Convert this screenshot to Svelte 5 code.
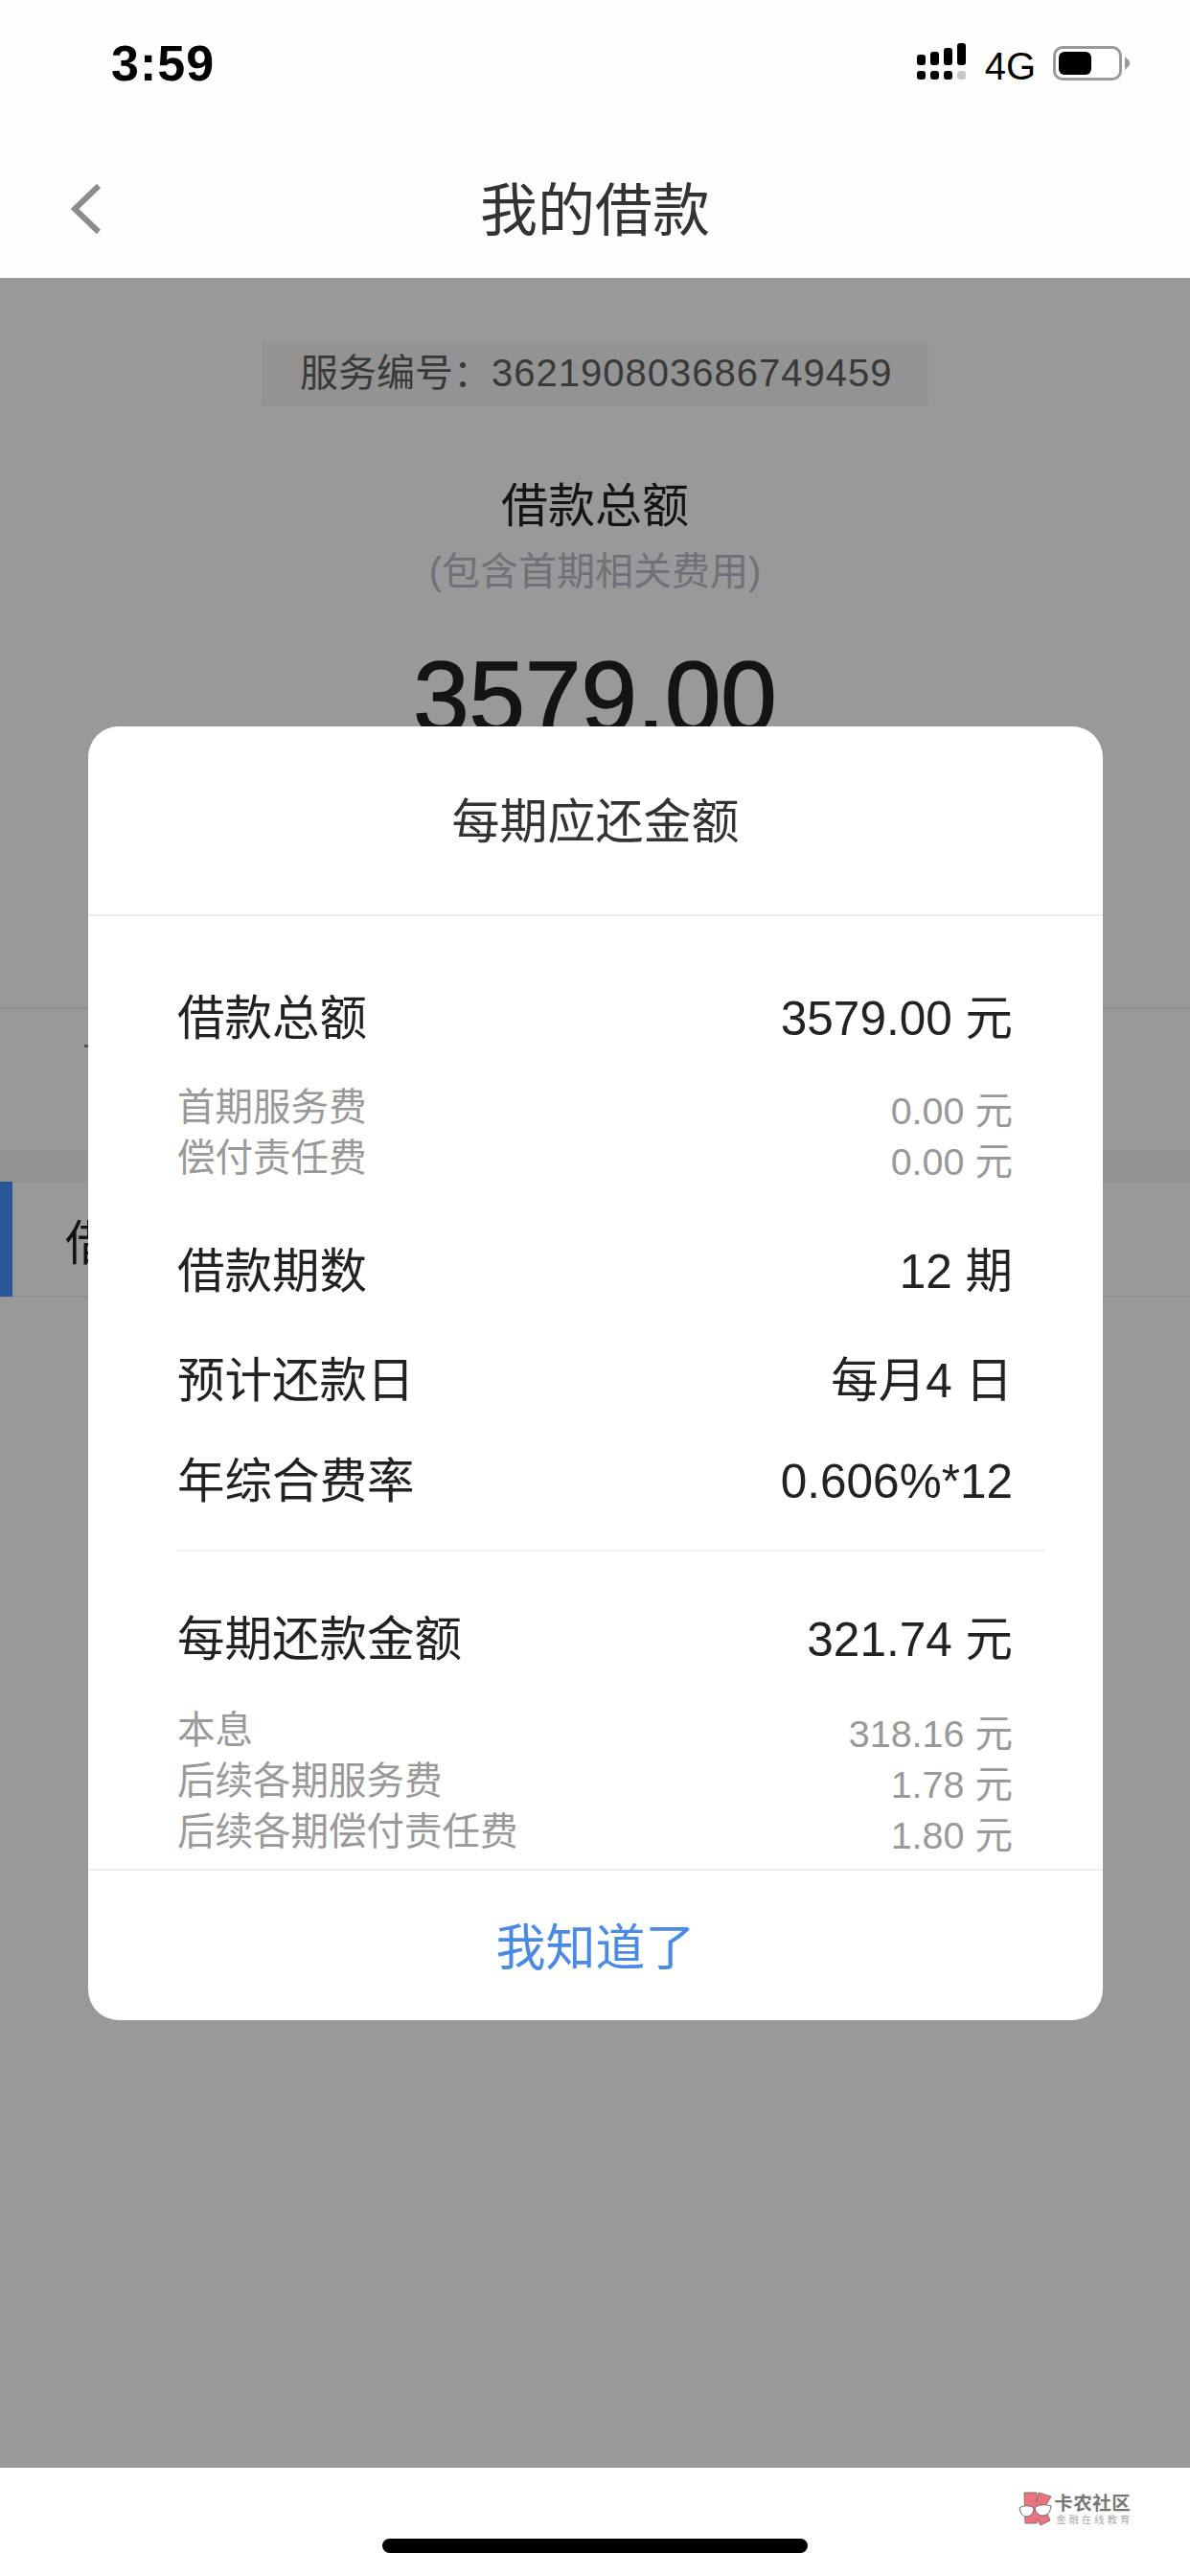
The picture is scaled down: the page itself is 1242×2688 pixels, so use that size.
<script>
  const block1 = [
    { label: '首期服务费', value: '0.00 元' },
    { label: '偿付责任费', value: '0.00 元' }
  ];
  const block2 = [
    { label: '本息', value: '318.16 元' },
    { label: '后续各期服务费', value: '1.78 元' },
    { label: '后续各期偿付责任费', value: '1.80 元' }
  ];
  const heights = [11, 14, 18, 23];
</script>

<div class="page">
  <header class="top">
    <div class="status">
      <span class="time">3:59</span>
      <div class="status-right">
        <div class="signal">
          {#each heights as h, i}
            <div class="sig-col">
              <i class="bar" style="height:{h}px"></i>
              <i class="dot" class:off={i === 3}></i>
            </div>
          {/each}
        </div>
        <span class="net">4G</span>
        <div class="battery"><i class="fill"></i></div>
        <i class="nub"></i>
      </div>
    </div>
    <div class="nav">
      <svg class="back" width="36" height="56" viewBox="0 0 36 56">
        <path d="M31 4 L6 28 L31 52" fill="none" stroke="#8c8c8c" stroke-width="6" />
      </svg>
      <h1>我的借款</h1>
    </div>
  </header>

  <main class="content">
    <div class="code"><span class="code-box">服务编号：<span class="code-num">362190803686749459</span></span></div>
    <div class="total-label">借款总额</div>
    <div class="total-note">(包含首期相关费用)</div>
    <div class="total">3579.00</div>
    <div class="info-row"><i class="tick"></i></div>
    <div class="band"></div>
    <div class="section"><i class="accent"></i><span>借</span></div>

    <div class="overlay"></div>

    <section class="modal">
      <div class="m-head">每期应还金额</div>
      <div class="m-body">
        <div class="row first"><span>借款总额</span><span>3579.00 元</span></div>
        <div class="subs s1">
          {#each block1 as r}
            <div class="sub"><span>{r.label}</span><span class="sv">{r.value}</span></div>
          {/each}
        </div>
        <div class="row r-term"><span>借款期数</span><span>12 期</span></div>
        <div class="row r-day"><span>预计还款日</span><span>每月4 日</span></div>
        <div class="row r-rate"><span>年综合费率</span><span>0.606%*12</span></div>
        <div class="rule"></div>
        <div class="row r-pay"><span>每期还款金额</span><span>321.74 元</span></div>
        <div class="subs s2">
          {#each block2 as r}
            <div class="sub"><span>{r.label}</span><span class="sv">{r.value}</span></div>
          {/each}
        </div>
      </div>
      <div class="m-foot">我知道了</div>
    </section>
  </main>

  <footer class="foot">
    <div class="mark">
      <svg width="36" height="38" viewBox="0 0 36 38">
        <path d="M6 2 H19 V12 L21 2 L34 6 L27 18 L33 31 L23 36 L19 29 V34 H7 Z" fill="#ec7480" stroke="#8a6a6c" stroke-width="1" />
        <path d="M1 18 C5 15 12 15 16 18 C16 24 12 27 8 27 C4 27 2 23 1 18 Z" fill="#fff" stroke="#666" stroke-width="1" />
        <path d="M17 18 C21 14 29 14 34 16 C33 23 30 26 25 26 C21 26 18 23 17 18 Z" fill="#fff" stroke="#666" stroke-width="1" />
      </svg>
      <div class="mark-text">
        <b>卡农社区</b>
        <small>金融在线教育</small>
      </div>
    </div>
    <div class="home"></div>
  </footer>
</div>

<style>
  :global(body) {
    margin: 0;
    background: #fff;
  }
  .page {
    width: 1242px;
    height: 2688px;
    display: flex;
    flex-direction: column;
    font-family: "Liberation Sans", "Noto Sans CJK SC", sans-serif;
    color: #222;
    overflow: hidden;
  }
  .top {
    height: 290px;
    flex: none;
    background: #fdfdfd;
  }
  .status {
    height: 130px;
    padding: 0 63px 0 116px;
    display: flex;
    justify-content: space-between;
    align-items: flex-start;
  }
  .time {
    margin-top: 36px;
    font-size: 52px;
    line-height: 60px;
    font-weight: 700;
    letter-spacing: 1px;
    color: #000;
  }
  .status-right {
    display: flex;
    align-items: flex-start;
    margin-top: 45px;
  }
  .signal {
    display: flex;
    gap: 5px;
    height: 38px;
    width: 52px;
    align-items: flex-end;
  }
  .sig-col {
    display: flex;
    flex-direction: column;
    align-items: center;
    gap: 6px;
  }
  .bar {
    display: block;
    width: 9px;
    background: #000;
    border-radius: 3px;
  }
  .dot {
    display: block;
    width: 9px;
    height: 9px;
    background: #000;
    border-radius: 3px;
  }
  .dot.off {
    background: #c8c8c8;
  }
  .net {
    margin-left: 19px;
    margin-top: 2px;
    font-size: 40px;
    line-height: 44px;
    color: #000;
  }
  .battery {
    margin-left: 18px;
    margin-top: 3px;
    width: 72px;
    height: 36px;
    box-sizing: border-box;
    border: 3px solid #9a9a9a;
    border-radius: 10px;
    padding: 3px;
    background: #fff;
  }
  .fill {
    display: block;
    width: 34px;
    height: 24px;
    background: #000;
    border-radius: 6px;
  }
  .nub {
    display: block;
    margin: 14px 0 0 3px;
    width: 5px;
    height: 14px;
    background: #9a9a9a;
    clip-path: polygon(0 0, 100% 35%, 100% 65%, 0 100%);
  }
  .nav {
    height: 160px;
    position: relative;
    display: flex;
    justify-content: center;
    padding-top: 55px;
    box-sizing: border-box;
  }
  .back {
    position: absolute;
    left: 72px;
    top: 60px;
  }
  h1 {
    margin: 0;
    font-size: 60px;
    line-height: 72px;
    font-weight: 400;
    color: #333;
  }

  .content {
    flex: 1;
    position: relative;
    background: #fff;
  }
  .code {
    display: flex;
    justify-content: center;
    padding-top: 67px;
  }
  .code-box {
    width: 696px;
    height: 67px;
    box-sizing: border-box;
    padding-left: 40px;
    background: #f5f5f5;
    border-radius: 4px;
    font-size: 40px;
    line-height: 65px;
    color: #5f5f5f;
    white-space: nowrap;
  }
  .code-num {
    letter-spacing: 1px;
  }
  .total-label {
    margin-top: 74px;
    text-align: center;
    font-size: 49px;
    line-height: 60px;
    color: #222;
  }
  .total-note {
    margin-top: 12px;
    text-align: center;
    font-size: 40px;
    line-height: 52px;
    color: #bbbbcc;
  }
  .total {
    margin-top: 46px;
    text-align: center;
    font-size: 105px;
    line-height: 120px;
    color: #222;
    -webkit-text-stroke: 1.5px #222;
  }
  .info-row {
    margin-top: 263px;
    height: 149px;
    border-top: 2px solid #f0f0f0;
    position: relative;
    padding: 37px 0 0 88px;
    box-sizing: border-box;
  }
  .tick {
    display: block;
    width: 6px;
    height: 3px;
    background: #888;
  }
  .band {
    height: 34px;
    background: #f5f5f5;
  }
  .section {
    height: 120px;
    display: flex;
    align-items: center;
    border-bottom: 2px solid #f0f0f0;
    box-sizing: border-box;
    font-size: 50px;
    color: #222;
  }
  .accent {
    width: 13px;
    height: 120px;
    margin-right: 55px;
    background: #4991ff;
  }

  .overlay {
    position: absolute;
    inset: 0;
    background: rgba(0, 0, 0, 0.4);
  }
  .modal {
    position: absolute;
    left: 92px;
    top: 468px;
    width: 1059px;
    height: 1350px;
    background: #fff;
    border-radius: 32px;
    display: flex;
    flex-direction: column;
    overflow: hidden;
  }
  .m-head {
    height: 198px;
    flex: none;
    box-sizing: border-box;
    border-bottom: 2px solid #eee;
    padding-top: 70px;
    text-align: center;
    font-size: 50px;
    line-height: 60px;
    color: #333;
  }
  .m-body {
    height: 996px;
    flex: none;
    box-sizing: border-box;
    padding-left: 93px;
    border-bottom: 2px solid #eee;
  }
  .row {
    height: 60px;
    padding-right: 94px;
    display: flex;
    justify-content: space-between;
    align-items: center;
    font-size: 49.5px;
    line-height: 60px;
    color: #222;
  }
  .row.first { margin-top: 77px; }
  .s1 { margin-top: 36px; }
  .r-term { margin-top: 62px; }
  .r-day { margin-top: 54px; }
  .r-rate { margin-top: 45px; }
  .rule {
    height: 2px;
    margin: 41px 60px 0 0;
    background: #eee;
  }
  .r-pay { margin-top: 62px; }
  .s2 { margin-top: 38px; }
  .sub {
    height: 53px;
    padding-right: 94px;
    display: flex;
    justify-content: space-between;
    font-size: 39.5px;
    line-height: 53px;
    color: #999;
  }
  .sv {
    margin-top: 4px;
  }
  .m-foot {
    flex: 1;
    display: flex;
    justify-content: center;
    align-items: center;
    padding-bottom: 4px;
    font-size: 52px;
    color: #4a8ae2;
  }

  .foot {
    height: 113px;
    flex: none;
    background: #fff;
    display: flex;
    flex-direction: column;
    align-items: center;
    position: relative;
  }
  .mark {
    align-self: flex-end;
    display: flex;
    align-items: center;
    gap: 1px;
    margin: 22px 60px 0 0;
    height: 42px;
  }
  .mark-text {
    display: flex;
    flex-direction: column;
  }
  .mark-text b {
    font-size: 19.5px;
    line-height: 22px;
    color: #777;
    letter-spacing: 0.5px;
  }
  .mark-text small {
    font-size: 10.5px;
    line-height: 13px;
    color: #aaa;
    letter-spacing: 2.8px;
    margin-left: 2px;
  }
  .home {
    margin-top: 10px;
    width: 444px;
    height: 15px;
    border-radius: 8px;
    background: #000;
  }
</style>
